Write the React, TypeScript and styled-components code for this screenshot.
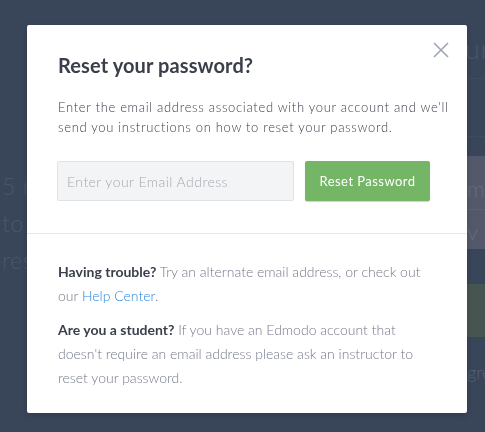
import React from "react";
import styled, { createGlobalStyle } from "styled-components";

const Global = createGlobalStyle`
  html, body {
    margin: 0;
    padding: 0;
    background: #394559;
    overflow: hidden;
  }
  body {
    font-family: Lato, "Open Sans", "Liberation Sans", sans-serif;
    -webkit-font-smoothing: antialiased;
  }
  * { box-sizing: border-box; }
`;

/* ---------- backdrop page (dimmed behind the modal) ---------- */

const Page = styled.div`
  width: 485px;
  height: 432px;
  display: flex;
  justify-content: space-between;
  overflow: hidden;
  color: #4c566a;
  font-weight: 300;
`;

const LeftCol = styled.div`
  width: 60px;
  padding-top: 168px;
  display: flex;
  flex-direction: column;
  margin-left: 2px;
`;

const FaintWord = styled.div<{ $size?: number; $h?: number }>`
  font-size: ${(p) => p.$size ?? 23}px;
  line-height: ${(p) => p.$h ?? 37}px;
  letter-spacing: 0.6px;
  white-space: nowrap;
`;

const RightCol = styled.div`
  width: 18px;
  display: flex;
  flex-direction: column;
  padding-top: 34px;
  overflow: hidden;
`;

const Rule = styled.div<{ $mt: number }>`
  margin-top: ${(p) => p.$mt}px;
  height: 1px;
  width: 200px;
  background: #3f4b5f;
`;

const GreyBox = styled.div`
  margin-top: 19px;
  width: 200px;
  height: 93px;
  background: #53596b;
  display: flex;
  flex-direction: column;
`;

const GreyRow = styled.div`
  height: 54px;
  padding-top: 19px;
  border-bottom: 1px solid #5b6173;
  font-size: 22px;
  color: #666b7c;
  white-space: nowrap;
`;

const GreyRow2 = styled.div`
  padding-top: 8px;
  font-size: 22px;
  color: #666b7c;
  white-space: nowrap;
`;

const GreenBox = styled.div`
  margin-top: 35px;
  width: 200px;
  height: 53px;
  background: #46554f;
`;

const SmallFaint = styled.div`
  margin-top: 24px;
  font-size: 18px;
  color: #56607a;
  white-space: nowrap;
`;

/* ---------- modal ---------- */

const Modal = styled.div`
  position: fixed;
  top: 25px;
  left: 27px;
  width: 440px;
  background: #ffffff;
  border-radius: 2px;
  box-shadow: 0 2px 6px rgba(0, 0, 0, 0.15);
`;

const CloseButton = styled.button`
  position: absolute;
  top: 16px;
  right: 17px;
  width: 18px;
  height: 18px;
  padding: 0;
  border: 0;
  background: transparent;
  cursor: pointer;
  display: flex;
  align-items: center;
  justify-content: center;
`;

const Header = styled.div`
  padding: 28px 24px 32px 31px;
  border-bottom: 1px solid #e6e8eb;
`;

const Title = styled.h2`
  margin: 0;
  font-size: 20px;
  line-height: 24px;
  font-weight: 700;
  letter-spacing: 0.1px;
  color: #3a3f4b;
`;

const Lead = styled.p`
  margin: 20px 0 24px;
  font-size: 13px;
  line-height: 20px;
  font-weight: 300;
  letter-spacing: 0.68px;
  white-space: nowrap;
  color: #3a3f4b;
`;

const Form = styled.form`
  width: 373px;
  display: flex;
  gap: 11px;
`;

const EmailInput = styled.input`
  width: 237px;
  height: 40px;
  margin-left: -1px;
  padding: 0 9px;
  background: #f3f4f6;
  border: 1px solid #dfe2e6;
  border-radius: 2px;
  font-family: inherit;
  font-size: 14px;
  font-weight: 300;
  letter-spacing: 0.45px;
  color: #3a3f4b;
  outline: none;
  &::placeholder {
    color: #a6a9b0;
  }
`;

const SubmitButton = styled.button`
  width: 125px;
  height: 40px;
  padding: 0;
  border: 0;
  border-radius: 2px;
  background: #74b666;
  box-shadow: 0 1px 1px rgba(0, 0, 0, 0.18);
  color: #ffffff;
  font-family: inherit;
  font-size: 13px;
  font-weight: 400;
  letter-spacing: 0.45px;
  cursor: pointer;
`;

const Footer = styled.div`
  padding: 26px 37px 23px 31px;
`;

const Help = styled.p`
  margin: 0 0 10px;
  font-size: 14px;
  line-height: 24px;
  font-weight: 300;
  color: #757a8b;
  &:last-child {
    margin-bottom: 0;
  }
`;

const Strong = styled.strong`
  font-weight: 700;
  color: #3a3f4b;
`;

const Link = styled.a`
  color: #2d88dc;
  text-decoration: none;
`;

export default function App() {
  return (
    <>
      <Global />
      <Page>
        <LeftCol>
          <FaintWord>5 m</FaintWord>
          <FaintWord>to</FaintWord>
          <FaintWord>res</FaintWord>
        </LeftCol>
        <RightCol>
          <FaintWord $size={27} $h={30} style={{ marginLeft: "-2px" }}>ur</FaintWord>
          <Rule $mt={14} />
          <Rule $mt={57} />
          <GreyBox>
            <GreyRow>ma</GreyRow>
            <GreyRow2>v P</GreyRow2>
          </GreyBox>
          <GreenBox />
          <SmallFaint>gre</SmallFaint>
        </RightCol>
      </Page>

      <Modal role="dialog" aria-labelledby="reset-title">
        <CloseButton aria-label="Close">
          <svg width="16" height="16" viewBox="0 0 16 16">
            <path d="M1 1 L15 15 M15 1 L1 15" stroke="#9fa5b3" strokeWidth="1.6" fill="none" />
          </svg>
        </CloseButton>
        <Header>
          <Title id="reset-title">Reset your password?</Title>
          <Lead>
            Enter the email address associated with your account and we'll
            <br />
            send you instructions on how to reset your password.
          </Lead>
          <Form onSubmit={(e) => e.preventDefault()}>
            <EmailInput type="email" placeholder="Enter your Email Address" />
            <SubmitButton type="submit">Reset Password</SubmitButton>
          </Form>
        </Header>
        <Footer>
          <Help>
            <Strong>Having trouble?</Strong> Try an alternate email address, or check out our{" "}
            <Link href="#">Help Center</Link>.
          </Help>
          <Help>
            <Strong>Are you a student?</Strong> If you have an Edmodo account that doesn't require an email
            address please ask an instructor to reset your password.
          </Help>
        </Footer>
      </Modal>
    </>
  );
}
